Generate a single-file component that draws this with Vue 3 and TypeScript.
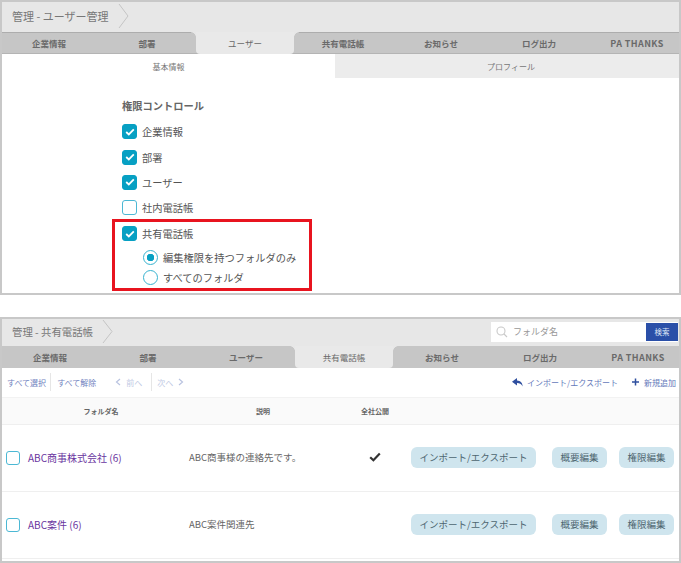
<template>
  <div class="page">
    <section class="panel panel--user">
      <header class="panel__head">
        <span class="crumb">管理 - ユーザー管理</span>
        <svg class="crumb__arrow" width="11" height="24" viewBox="0 0 11 24"><path d="M1 0 L10 12 L1 24" fill="none" stroke="#c4c4c4" /></svg>
      </header>
      <nav class="tabs tabs--user">
        <span
          v-for="tab in tabs"
          :key="tab"
          class="tab"
          :class="{ 'tab--active': tab === 'ユーザー', 'tab--latin': tab === 'PA THANKS' }"
        >{{ tab }}</span>
      </nav>
      <div class="subtabs">
        <span class="subtab subtab--active">基本情報</span>
        <span class="subtab">プロフィール</span>
      </div>
      <div class="perm">
        <h3 class="perm__title">権限コントロール</h3>
        <label v-for="item in perms" :key="item.label" class="check-row">
          <span class="box" :class="{ 'box--on': item.on }">
            <svg v-if="item.on" width="10" height="8" viewBox="0 0 10 8"><path d="M1.2 4 L3.8 6.4 L8.8 1.4" fill="none" stroke="#fff" stroke-width="1.8" /></svg>
          </span>
          {{ item.label }}
        </label>
        <div class="highlight">
          <label class="check-row check-row--in">
            <span class="box box--on">
              <svg width="10" height="8" viewBox="0 0 10 8"><path d="M1.2 4 L3.8 6.4 L8.8 1.4" fill="none" stroke="#fff" stroke-width="1.8" /></svg>
            </span>
            共有電話帳
          </label>
          <label class="radio-row"><span class="radio radio--on"></span>編集権限を持つフォルダのみ</label>
          <label class="radio-row"><span class="radio"></span>すべてのフォルダ</label>
        </div>
      </div>
    </section>

    <section class="panel panel--shared">
      <header class="panel__head panel__head--shared">
        <span class="crumb crumb--small">管理 - 共有電話帳</span>
        <svg class="crumb__arrow" width="11" height="23" viewBox="0 0 11 23"><path d="M1 0 L10 11.5 L1 23" fill="none" stroke="#c4c4c4" /></svg>
        <div class="search">
          <svg width="12" height="12" viewBox="0 0 12 12" class="search__icon"><circle cx="5" cy="5" r="4" fill="none" stroke="#c9c9c9" stroke-width="1.1" /><path d="M8 8 L11 11" stroke="#c9c9c9" stroke-width="1.1" /></svg>
          <span class="search__text">フォルダ名</span>
          <button class="search__btn">検索</button>
        </div>
      </header>
      <nav class="tabs tabs--shared">
        <span
          v-for="tab in tabs"
          :key="tab"
          class="tab"
          :class="{ 'tab--active': tab === '共有電話帳', 'tab--latin': tab === 'PA THANKS' }"
        >{{ tab }}</span>
      </nav>
      <div class="toolbar">
        <span class="tool">すべて選択</span>
        <i class="sep"></i>
        <span class="tool">すべて解除</span>
        <span class="tool tool--muted tool--prev">
          <svg width="6" height="8" viewBox="0 0 6 8"><path d="M5 1 L1.5 4 L5 7" fill="none" stroke="#b9c3e0" stroke-width="1.2" /></svg>
          前へ
        </span>
        <i class="sep sep--pager"></i>
        <span class="tool tool--muted">
          次へ
          <svg width="6" height="8" viewBox="0 0 6 8"><path d="M1 1 L4.5 4 L1 7" fill="none" stroke="#b9c3e0" stroke-width="1.2" /></svg>
        </span>
        <span class="tool tool--io">
          <svg width="11" height="9" viewBox="0 0 11 9"><path d="M5 0 L0 3.8 L5 7.4 L5 5 C7.5 5 9.4 6 10.6 8.4 C10.6 5 8.5 2.7 5 2.5 Z" fill="#2f4f9f" /></svg>
          インポート/エクスポート
        </span>
        <span class="tool tool--add">
          <svg width="7" height="8" viewBox="0 0 7 8"><path d="M3.5 0.5 V7.5 M0 4 H7" stroke="#2f4f9f" stroke-width="1.5" /></svg>
          新規追加
        </span>
      </div>
      <div class="table-head">
        <span>フォルダ名</span>
        <span>説明</span>
        <span>全社公開</span>
      </div>
      <div v-for="row in rows" :key="row.name" class="row">
        <span class="box box--row"></span>
        <a class="row__name">{{ row.name }}</a>
        <span class="row__desc">{{ row.desc }}</span>
        <span class="row__public">
          <svg v-if="row.shared" width="12" height="10" viewBox="0 0 12 10"><path d="M1.2 5.2 L4.4 8.2 L10.8 1.6" fill="none" stroke="#333" stroke-width="2.2" /></svg>
        </span>
        <button class="pill pill--wide">インポート/エクスポート</button>
        <button class="pill">概要編集</button>
        <button class="pill">権限編集</button>
      </div>
    </section>
  </div>
</template>

<script setup lang="ts">
const tabs = ['企業情報', '部署', 'ユーザー', '共有電話帳', 'お知らせ', 'ログ出力', 'PA THANKS']

const perms = [
  { label: '企業情報', on: true },
  { label: '部署', on: true },
  { label: 'ユーザー', on: true },
  { label: '社内電話帳', on: false },
]

const rows = [
  { name: 'ABC商事株式会社 (6)', desc: 'ABC商事様の連絡先です。', shared: true },
  { name: 'ABC案件 (6)', desc: 'ABC案件関連先', shared: false },
]
</script>

<style>
html,
body {
  margin: 0;
  background: #fff;
}
</style>

<style scoped>
.page {
  width: 681px;
  height: 563px;
  overflow: hidden;
  font-family: "Noto Sans CJK JP", "Noto Sans", sans-serif;
  color: #555;
  background: #fff;
}

.panel {
  box-sizing: border-box;
  overflow: hidden;
  border: 2px solid #c8c8c8;
}

.panel--user {
  height: 295px;
}

.panel--shared {
  height: 246px;
  margin-top: 22px;
}

.panel__head {
  display: flex;
  align-items: center;
  box-sizing: border-box;
  height: 30px;
  padding: 0 0 3px 10px;
  background: #e7e7e7;
}

.panel__head--shared {
  height: 27px;
  padding-bottom: 2px;
}

.crumb {
  font-size: 11px;
  color: #777;
}

.crumb--small {
  font-size: 10.4px;
}

.crumb__arrow {
  margin-left: 9px;
}

.tabs {
  display: grid;
  grid-template-columns: repeat(7, 98px);
  box-sizing: border-box;
  height: 22px;
  background: #c6c6c6;
}

.tabs--user {
  margin-left: -2px;
  border-top: 1px solid #adadad;
  border-bottom: 1px solid #b4b4b4;
}

.tabs--shared {
  margin-left: -1px;
}

.tab {
  display: flex;
  align-items: center;
  justify-content: center;
  font-size: 8.5px;
  font-weight: 700;
  color: #6a6a6a;
}

.tab--latin {
  font-size: 9px;
  letter-spacing: 0.4px;
}

/* the neighbours' top corners curve away from the active tab */
.tab--active {
  position: relative;
  border-radius: 0 0 4px 4px;
  font-weight: 400;
  background: #e9e9e9;
}

.tabs--user .tab--active {
  margin: -1px 0;
}

.tab--active::before,
.tab--active::after {
  content: "";
  position: absolute;
  top: 0;
  width: 5px;
  height: 5px;
}

.tab--active::before {
  left: -5px;
  background: radial-gradient(circle at 0 100%, #c6c6c6 4.5px, #e7e7e7 5px);
}

.tab--active::after {
  right: -5px;
  background: radial-gradient(circle at 100% 100%, #c6c6c6 4.5px, #e7e7e7 5px);
}

.subtabs {
  display: grid;
  grid-template-columns: 333px 1fr;
  height: 24px;
}

.subtab {
  display: flex;
  align-items: center;
  justify-content: center;
  padding-left: 8px;
  font-size: 8px;
  color: #777;
  background: #ececec;
}

.subtab--active {
  padding-left: 0;
  background: #fff;
}

.perm {
  padding: 20px 0 0 120px;
}

.perm__title {
  margin: 0 0 5px;
  font-size: 10.25px;
  line-height: 16px;
  font-weight: 700;
  color: #666;
}

.check-row {
  display: flex;
  align-items: center;
  gap: 5px;
  height: 25.4px;
  font-size: 10.25px;
  color: #555;
}

.check-row--in {
  height: 22px;
}

.box {
  display: flex;
  flex-shrink: 0;
  align-items: center;
  justify-content: center;
  box-sizing: border-box;
  width: 15px;
  height: 15px;
  border: 1px solid #4cb8d4;
  border-radius: 3px;
  background: #fff;
}

.box--on {
  border-color: #07a0c3;
  background: #07a0c3;
}

.highlight {
  box-sizing: border-box;
  width: 200px;
  height: 72px;
  margin: -2px 0 0 -10px;
  padding: 1px 0 0 7px;
  border: 3px solid #e8141f;
}

.check-row--in + .radio-row {
  margin-top: 3px;
}

.radio-row {
  display: flex;
  align-items: center;
  gap: 5px;
  height: 20px;
  padding-left: 21px;
  font-size: 10.25px;
  color: #555;
}

.radio {
  box-sizing: border-box;
  flex-shrink: 0;
  width: 15px;
  height: 15px;
  border: 1px solid #38b3d0;
  border-radius: 50%;
  background: #fff;
}

.radio--on {
  background: radial-gradient(circle, #07a0c3 0 3.5px, #fff 4px);
}

.search {
  display: flex;
  align-items: center;
  width: 187px;
  height: 20px;
  margin-left: auto;
  margin-right: 1px;
  background: #fff;
}

.search__icon {
  margin-left: 5px;
}

.search__text {
  margin-left: 5px;
  font-size: 9px;
  color: #999;
}

.search__btn {
  width: 32px;
  height: 18px;
  margin-left: auto;
  padding: 0;
  border: 0;
  font-family: inherit;
  font-size: 7.5px;
  color: #dfe6f7;
  background: #2a4fa8;
}

.toolbar {
  display: flex;
  align-items: center;
  height: 28px;
  margin-bottom: 1px;
  padding: 0 3px 0 5px;
}

.tool {
  display: inline-flex;
  align-items: center;
  gap: 5px;
  font-size: 8px;
  color: #6f82c0;
}

.tool--muted {
  color: #c0c9e4;
}

.tool--prev {
  margin-left: 19px;
}

.tool--io {
  margin-left: auto;
  gap: 4px;
  color: #6478ba;
}

.tool--add {
  margin-left: 14px;
  color: #6478ba;
}

.sep {
  width: 1px;
  height: 18px;
  margin: 0 6px 0 4px;
  background: #e6e6e6;
}

.sep--pager {
  margin: 0 5px 0 9px;
}

.table-head {
  display: flex;
  box-sizing: border-box;
  align-items: center;
  height: 28px;
  border-top: 1px solid #f2f2f2;
  border-bottom: 1px solid #efefef;
  font-size: 7px;
  font-weight: 700;
  color: #666;
  background: #fafafa;
}

.table-head span {
  text-align: center;
}

.table-head span:nth-child(1) {
  width: 198px;
}

.table-head span:nth-child(2) {
  width: 126px;
}

.table-head span:nth-child(3) {
  width: 98px;
}

.row {
  display: grid;
  grid-template-columns: 22px 161px 162px 60px 141px 67px 55px;
  align-items: center;
  box-sizing: border-box;
  height: 67px;
  padding: 0 0 2px 4px;
  border-bottom: 1px solid #efefef;
  font-size: 9.5px;
}

.box--row {
  width: 14px;
  height: 14px;
  margin-top: 1px;
}

.row__name {
  font-size: 10px;
  color: #6a35a0;
}

.row__desc {
  font-size: 9.5px;
  color: #666;
}

.row__public {
  display: flex;
  justify-content: center;
  width: 44px;
  margin-left: 2px;
}

.pill {
  justify-self: start;
  width: 55px;
  height: 21px;
  padding: 0;
  border: 0;
  border-radius: 6px;
  font-family: inherit;
  font-size: 9.5px;
  color: #4d6570;
  background: #cfe5ee;
}

.pill--wide {
  width: 125px;
}
</style>
